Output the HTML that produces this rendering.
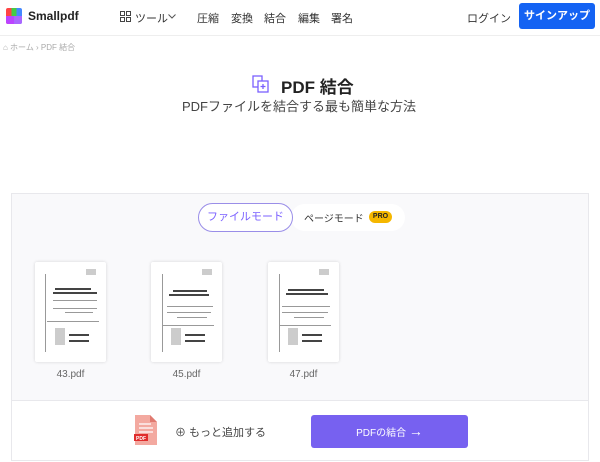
<!DOCTYPE html>
<html><head><meta charset="utf-8"><style>
*{margin:0;padding:0;box-sizing:border-box}
body{width:600px;height:462px;background:#fff;font-family:"Liberation Sans","Noto Sans CJK JP",sans-serif;position:relative;overflow:hidden;color:#222}
.a{position:absolute;white-space:nowrap}
.nav{font-size:11px;color:#333;top:10px}
.thumb{position:absolute;top:262px;width:71px;height:100px;background:#fff;box-shadow:0 0 3px rgba(0,0,0,.15);border-radius:2px}
.thumb i{position:absolute;background:#999;height:1px}
.thumb b{position:absolute;background:#444;height:2px}
.lbl{position:absolute;top:369px;font-size:10px;color:#666;width:71px;text-align:center}
</style></head><body>
<div class="a" style="left:0;top:0;width:600px;height:36px;border-bottom:1px solid #eee"></div>
<div class="a" style="left:6px;top:8px;width:16px;height:16px;background:linear-gradient(90deg,#f44 0 33%,#4c4 33% 66%,#48f 66%);border-radius:2px"></div>
<div class="a" style="left:6px;top:16px;width:16px;height:8px;background:linear-gradient(90deg,#b4f 0 50%,#a6f 50%);border-radius:0 0 2px 2px"></div>
<div class="a" style="left:28px;top:9px;font-size:12px;font-weight:bold">Smallpdf</div>
<svg class="a" style="left:120px;top:11px" width="11" height="11" viewBox="0 0 11 11" fill="none" stroke="#444"><rect x=".5" y=".5" width="4" height="4"/><rect x="6.5" y=".5" width="4" height="4"/><rect x=".5" y="6.5" width="4" height="4"/><rect x="6.5" y="6.5" width="4" height="4"/></svg>
<div class="a nav" style="left:135px">ツール</div>
<svg class="a" style="left:168px;top:14px" width="8" height="5" viewBox="0 0 8 5" fill="none" stroke="#555"><path d="M.5.5l3.5 3.5 3.5-3.5"/></svg>
<div class="a nav" style="left:197px">圧縮</div>
<div class="a nav" style="left:231px">変換</div>
<div class="a nav" style="left:264px">結合</div>
<div class="a nav" style="left:298px">編集</div>
<div class="a nav" style="left:331px">署名</div>
<div class="a nav" style="left:467px">ログイン</div>
<div class="a" style="left:519px;top:3px;width:76px;height:26px;background:#1463f3;border-radius:3px;color:#fff;font-size:11px;font-weight:bold;text-align:center;line-height:26px">サインアップ</div>
<div class="a" style="left:3px;top:42px;font-size:8px;color:#aaa">⌂ ホーム › PDF 結合</div>
<svg class="a" style="left:251px;top:74px" width="20" height="20" viewBox="0 0 20 20" fill="none" stroke="#7b61ff" stroke-width="1.3"><rect x="2" y="2" width="9" height="11"/><rect x="7" y="7" width="10" height="11" fill="#fff"/><path d="M12 10v5M9.5 12.5h5"/></svg>
<div class="a" style="left:281px;top:73px;font-size:17px;font-weight:bold">PDF 結合</div>
<div class="a" style="left:182px;top:96px;font-size:13px;color:#444">PDFファイルを結合する最も簡単な方法</div>
<div class="a" style="left:11px;top:193px;width:578px;height:268px;border:1px solid #e8e8ec;background:#f9f9fb"></div>
<div class="a" style="left:11px;top:400px;width:578px;height:61px;border:1px solid #e8e8ec;background:#fff"></div>
<div class="a" style="left:291px;top:204px;width:114px;height:27px;background:#fff;border-radius:14px"></div>
<div class="a" style="left:198px;top:203px;width:95px;height:29px;border:1px solid #9a8ee8;border-radius:15px;background:#fff;color:#7b61ff;font-size:11px;text-align:center;line-height:27px">ファイルモード</div>
<div class="a" style="left:304px;top:210px;font-size:10px;color:#333">ページモード</div>
<div class="a" style="left:369px;top:211px;width:23px;height:12px;background:#f5b700;border-radius:6px;font-size:7px;font-weight:bold;text-align:center;line-height:12px">PRO</div>
<div class="thumb" style="left:35px"><i style="left:10px;top:12px;width:1px;height:78px"></i><i style="left:51px;top:7px;width:10px;height:6px;background:#ccc"></i><b style="left:20px;top:26px;width:36px"></b><b style="left:18px;top:30px;width:44px"></b><i style="left:18px;top:38px;width:44px"></i><i style="left:18px;top:46px;width:44px"></i><i style="left:30px;top:50px;width:28px"></i><i style="left:12px;top:59px;width:52px"></i><div style="position:absolute;left:20px;top:66px;width:10px;height:17px;background:#ccc"></div><b style="left:34px;top:72px;width:20px"></b><b style="left:34px;top:78px;width:20px"></b></div>
<div class="thumb" style="left:151px"><i style="left:11px;top:12px;width:1px;height:78px"></i><i style="left:51px;top:7px;width:10px;height:6px;background:#ccc"></i><b style="left:22px;top:28px;width:34px"></b><b style="left:18px;top:32px;width:40px"></b><i style="left:16px;top:44px;width:46px"></i><i style="left:16px;top:50px;width:44px"></i><i style="left:26px;top:55px;width:30px"></i><i style="left:11px;top:63px;width:52px"></i><div style="position:absolute;left:20px;top:66px;width:10px;height:17px;background:#ccc"></div><b style="left:34px;top:72px;width:20px"></b><b style="left:34px;top:78px;width:20px"></b></div>
<div class="thumb" style="left:268px"><i style="left:11px;top:12px;width:1px;height:78px"></i><i style="left:51px;top:7px;width:10px;height:6px;background:#ccc"></i><b style="left:20px;top:27px;width:36px"></b><b style="left:18px;top:31px;width:42px"></b><i style="left:14px;top:44px;width:48px"></i><i style="left:14px;top:50px;width:46px"></i><i style="left:26px;top:55px;width:30px"></i><i style="left:11px;top:63px;width:52px"></i><div style="position:absolute;left:20px;top:66px;width:10px;height:17px;background:#ccc"></div><b style="left:34px;top:72px;width:20px"></b><b style="left:34px;top:78px;width:20px"></b></div>
<div class="lbl" style="left:35px">43.pdf</div>
<div class="lbl" style="left:151px">45.pdf</div>
<div class="lbl" style="left:268px">47.pdf</div>
<svg class="a" style="left:134px;top:414px" width="24" height="32" viewBox="0 0 24 32"><path d="M1 1h15l7 7v23H1z" fill="#f3a9a0"/><path d="M16 1v7h7" fill="#e07a70"/><path d="M5 10h12M5 14h14M5 18h14" stroke="#fff" stroke-width="1.2"/><rect x="0" y="20" width="14" height="7" fill="#e02d2d"/><text x="2" y="26" font-size="5" fill="#fff" font-family="Liberation Sans" font-weight="bold">PDF</text></svg>
<div class="a" style="left:175px;top:424px;font-size:11px;color:#444">⊕ もっと追加する</div>
<div class="a" style="left:311px;top:415px;width:157px;height:33px;background:#7761f0;border-radius:3px;color:#fff;font-size:10px;text-align:center;line-height:33px">PDFの結合 <span style="font-size:14px">→</span></div>
</body></html>
